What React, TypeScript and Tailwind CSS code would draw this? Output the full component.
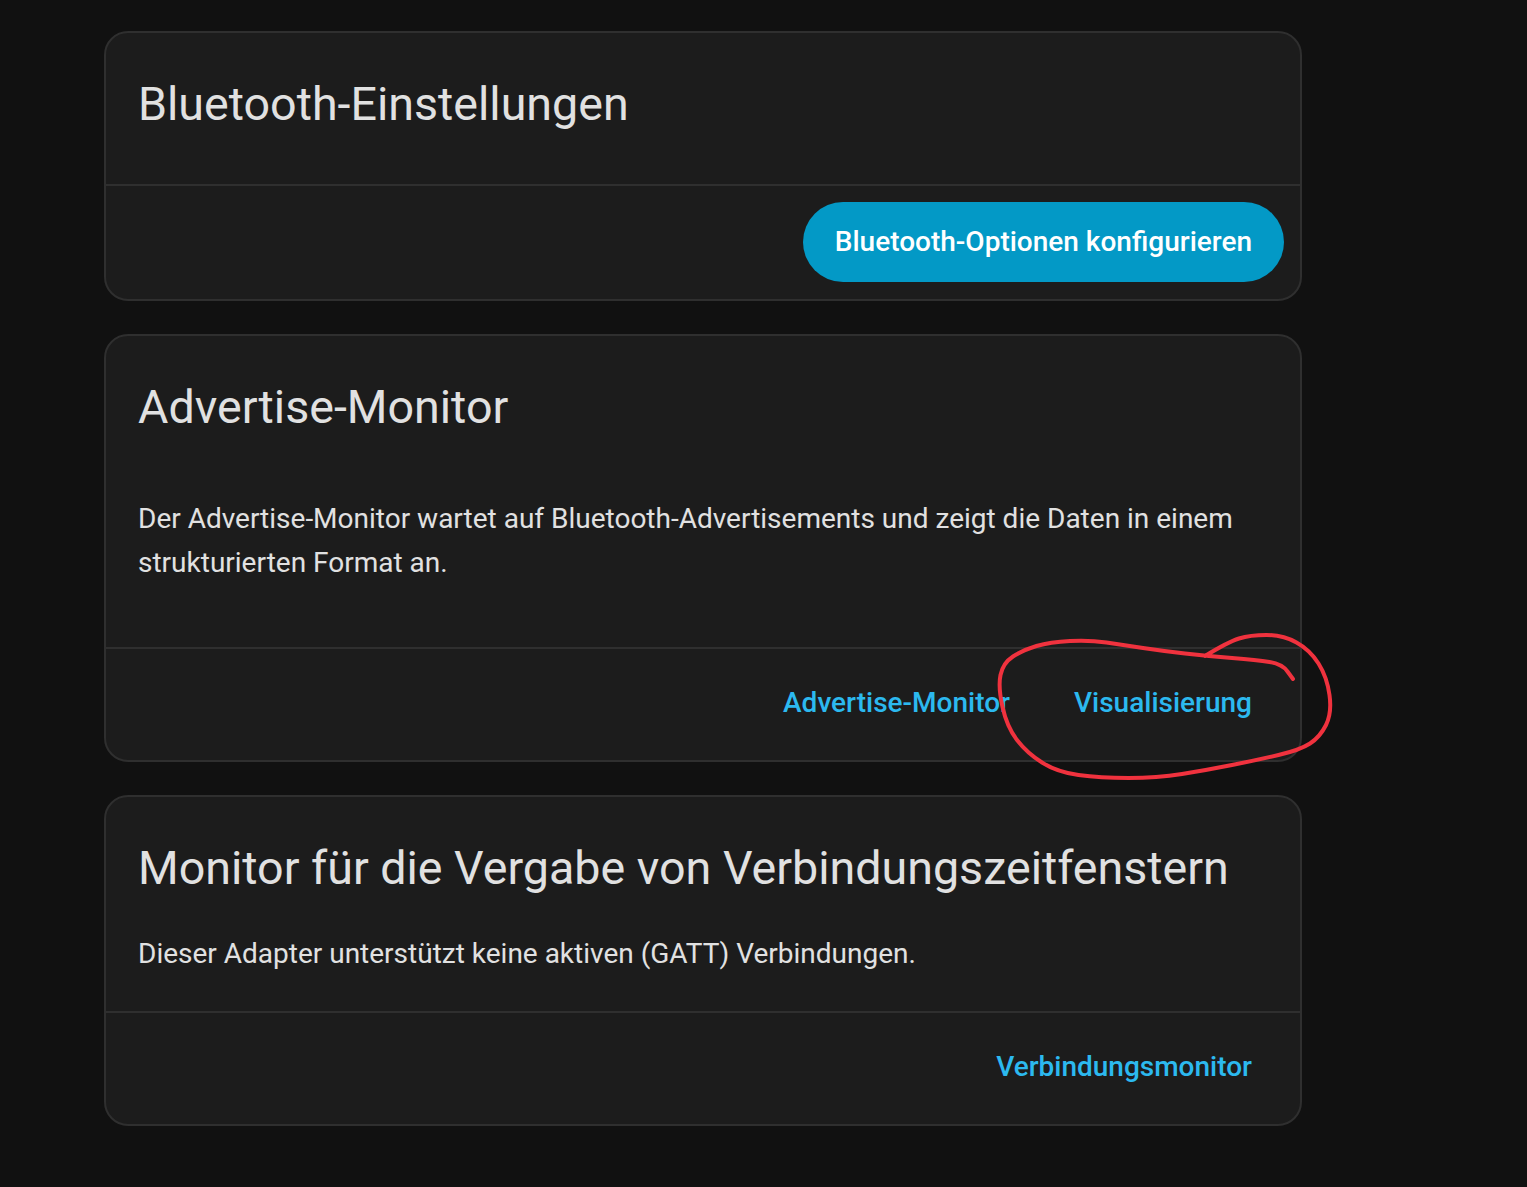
import React from "react";

const loop: [number, number][] = [
  [1205, 656], [1228, 642], [1250, 635], [1283, 635], [1310, 650], [1327, 677],
  [1332, 713], [1320, 737], [1300, 750], [1257, 760], [1207, 770], [1157, 778],
  [1100, 778], [1057, 772], [1027, 753], [1007, 727], [998, 687], [1003, 663],
  [1023, 650], [1050, 642], [1090, 640], [1123, 645], [1163, 651], [1207, 656],
  [1257, 660], [1282, 664], [1293, 679],
];

function smoothPath(pts: [number, number][]) {
  let d = `M ${pts[0][0]} ${pts[0][1]}`;
  for (let i = 1; i < pts.length - 1; i++) {
    const mx = (pts[i][0] + pts[i + 1][0]) / 2;
    const my = (pts[i][1] + pts[i + 1][1]) / 2;
    d += ` Q ${pts[i][0]} ${pts[i][1]} ${mx} ${my}`;
  }
  const last = pts[pts.length - 1];
  d += ` L ${last[0]} ${last[1]}`;
  return d;
}

function Card({ children }: { children: React.ReactNode }) {
  return (
    <div className="w-[1198px] rounded-[24px] border-2 border-[#2f2f2f] bg-[#1c1c1c]">
      {children}
    </div>
  );
}

function Title({ children }: { children: React.ReactNode }) {
  return (
    <div className="px-8 pt-[43px] text-[46.6px] leading-[56px] text-[#e1e1e1]">{children}</div>
  );
}

function TextButton({ children }: { children: React.ReactNode }) {
  return (
    <button className="h-[80px] px-8 text-[28px] font-medium text-[#2cb9ef]">{children}</button>
  );
}

export default function App() {
  return (
    <div
      className="relative min-h-[1187px] bg-[#111111] pl-[104px] pt-[31px]"
      style={{ fontFamily: "Roboto, 'Noto Sans', sans-serif" }}
    >
      <div className="flex flex-col gap-[33px]">
        <Card>
          <div className="pb-[52px]">
            <Title>Bluetooth-Einstellungen</Title>
          </div>
          <div className="flex justify-end border-t-2 border-[#2f2f2f] px-4 pb-[17px] pt-4">
            <button className="h-[80px] rounded-full bg-[#0399c6] px-8 text-[28px] font-medium text-white">
              Bluetooth-Optionen konfigurieren
            </button>
          </div>
        </Card>

        <Card>
          <Title>Advertise-Monitor</Title>
          <p className="px-8 pb-[62px] pt-[62px] text-[28px] leading-[44px] text-[#e1e1e1]">
            Der Advertise-Monitor wartet auf Bluetooth-Advertisements und zeigt die Daten in einem
            strukturierten Format an.
          </p>
          <div className="flex justify-end border-t-2 border-[#2f2f2f] px-4 pb-[17px] pt-[14px]">
            <TextButton>Advertise-Monitor</TextButton>
            <TextButton>Visualisierung</TextButton>
          </div>
        </Card>

        <Card>
          <Title>Monitor für die Vergabe von Verbindungszeitfenstern</Title>
          <p className="px-8 pb-[35px] pt-[36px] text-[28px] leading-[44px] text-[#e1e1e1]">
            Dieser Adapter unterstützt keine aktiven (GATT) Verbindungen.
          </p>
          <div className="flex justify-end border-t-2 border-[#2f2f2f] px-4 pb-[17px] pt-[14px]">
            <TextButton>Verbindungsmonitor</TextButton>
          </div>
        </Card>
      </div>

      <svg className="pointer-events-none absolute left-0 top-0" width="1527" height="1187">
        <path
          d={smoothPath(loop)}
          fill="none"
          stroke="#f0323e"
          strokeWidth="4"
          strokeLinecap="round"
          strokeLinejoin="round"
        />
      </svg>
    </div>
  );
}
